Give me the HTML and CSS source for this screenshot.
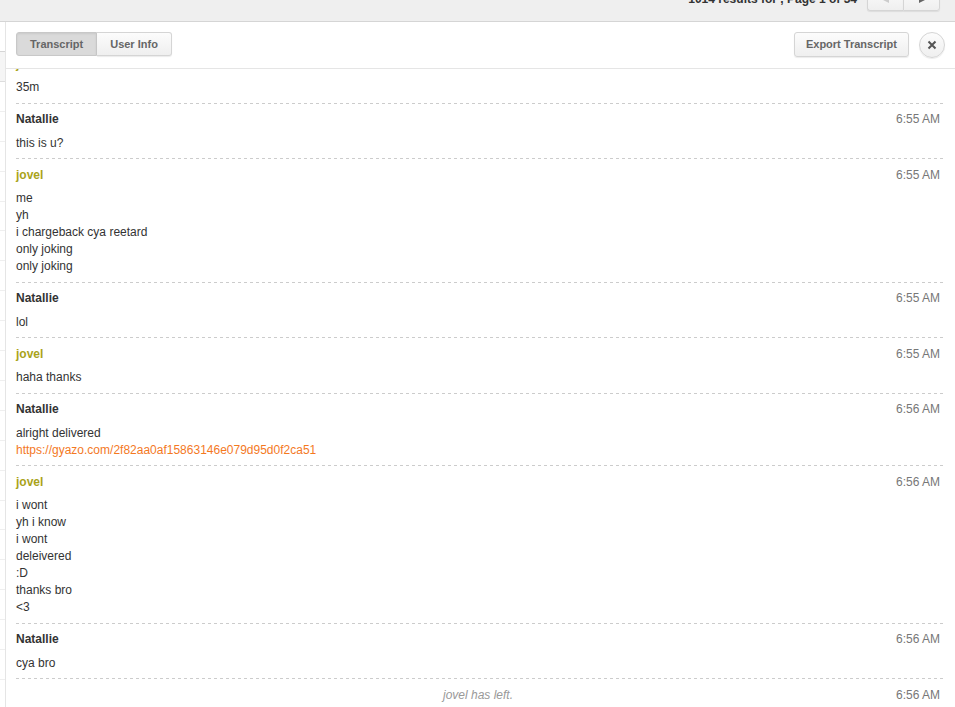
FILE: index.html
```
<!DOCTYPE html>
<html lang="en">
<head>
  <meta charset="UTF-8">
  <meta name="viewport" content="width=device-width, initial-scale=1.0">
  <title>Chat Transcript</title>
  <link rel="stylesheet" href="styles.css">
</head>
<body>
  <header class="results-bar">
    <span class="results-count">1014 results for , Page 1 of 34</span>
    <div class="pager">
      <button type="button" class="prev" aria-label="Previous page" disabled>
        <svg width="6" height="6" viewBox="0 0 6 6"><path d="M6 0v6L0 3z"/></svg>
      </button>
      <button type="button" class="next" aria-label="Next page">
        <svg width="6" height="6" viewBox="0 0 6 6"><path d="M0 0v6l6-3z"/></svg>
      </button>
    </div>
  </header>

  <main class="content">
    <ul class="chat-list" aria-hidden="true">
      <li class="list-head"></li>
      <li class="selected"></li>
      <li></li><li></li><li></li><li></li><li></li><li></li><li></li><li></li>
      <li></li><li></li><li></li><li></li><li></li><li></li><li></li><li></li>
      <li></li><li></li><li></li><li></li><li></li>
    </ul>

    <section class="panel">
      <div class="toolbar">
        <div class="tabs">
          <button type="button" class="active">Transcript</button>
          <button type="button">User Info</button>
        </div>
        <div class="actions">
          <button type="button" class="export">Export Transcript</button>
          <button type="button" class="close" aria-label="Close">
            <svg width="10" height="10" viewBox="0 0 10 10"><path d="M1.5 1.5l7 7M8.5 1.5l-7 7"/></svg>
          </button>
        </div>
      </div>

      <div class="transcript">
        <div class="message visitor">
          <div class="message-head"><strong>jovel</strong></div>
          <p>35m</p>
        </div>
        <div class="message">
          <div class="message-head"><strong>Natallie</strong><time>6:55 AM</time></div>
          <p>this is u?</p>
        </div>
        <div class="message visitor">
          <div class="message-head"><strong>jovel</strong><time>6:55 AM</time></div>
          <p>me</p>
          <p>yh</p>
          <p>i chargeback cya reetard</p>
          <p>only joking</p>
          <p>only joking</p>
        </div>
        <div class="message">
          <div class="message-head"><strong>Natallie</strong><time>6:55 AM</time></div>
          <p>lol</p>
        </div>
        <div class="message visitor">
          <div class="message-head"><strong>jovel</strong><time>6:55 AM</time></div>
          <p>haha thanks</p>
        </div>
        <div class="message">
          <div class="message-head"><strong>Natallie</strong><time>6:56 AM</time></div>
          <p>alright delivered</p>
          <p><a href="https://gyazo.com/2f82aa0af15863146e079d95d0f2ca51">https://gyazo.com/2f82aa0af15863146e079d95d0f2ca51</a></p>
        </div>
        <div class="message visitor">
          <div class="message-head"><strong>jovel</strong><time>6:56 AM</time></div>
          <p>i wont</p>
          <p>yh i know</p>
          <p>i wont</p>
          <p>deleivered</p>
          <p>:D</p>
          <p>thanks bro</p>
          <p>&lt;3</p>
        </div>
        <div class="message">
          <div class="message-head"><strong>Natallie</strong><time>6:56 AM</time></div>
          <p>cya bro</p>
        </div>
        <div class="message notice">
          <em>jovel has left.</em><time>6:56 AM</time>
        </div>
      </div>
    </section>
  </main>
</body>
</html>
```
FILE: styles.css
```
* {
  box-sizing: border-box;
}
body {
  font-family: "Liberation Sans", Arial, sans-serif;
  font-size: 12px;
  line-height: 17px;
  color: #333;
  margin: 0;
  height: 100vh;
  display: flex;
  flex-direction: column;
  overflow: hidden;
  background-color: #fff;
}
button {
  font-family: inherit;
  font-size: 11px;
  font-weight: bold;
  line-height: 14px;
  color: #666;
  border: 1px solid #d5d5d5;
  background: linear-gradient(#fcfcfc, #efefef);
  box-shadow: 0 1px 1px rgba(0, 0, 0, 0.08);
  cursor: pointer;
}

/* results bar, scrolled partly out of view */
.results-bar {
  flex: none;
  height: 22px;
  display: flex;
  justify-content: flex-end;
  align-items: flex-end;
  gap: 10px;
  padding: 0 15px 10px 0;
  background-color: #efefef;
  border-bottom: 1px solid #d5d5d5;
  overflow: hidden;
}
.results-count {
  font-weight: bold;
  margin-bottom: 3px;
}
.pager {
  display: flex;
}
.pager button {
  width: 37px;
  height: 25px;
  padding: 0;
}
.pager svg {
  fill: #666;
}
.pager .prev {
  width: 36px;
  border-radius: 3px 0 0 3px;
  border-right: 0;
}
.pager .prev svg {
  fill: #ccc;
}
.pager .next {
  border-radius: 0 3px 3px 0;
}

.content {
  flex: 1;
  min-height: 0;
  display: flex;
}
.chat-list {
  flex: none;
  width: 6px;
  margin: 0;
  padding: 0;
  list-style: none;
  border-right: 1px solid #e5e5e5;
  overflow: hidden;
}
.chat-list li {
  height: 30px;
  border-bottom: 1px solid #efefef;
}
.chat-list li:nth-child(10n + 7) {
  height: 29px;
}
.chat-list .list-head {
  border-bottom-color: #d5d5d5;
}
.chat-list .selected {
  background-color: #f5f5f5;
  border-bottom-color: #ddd;
}

.panel {
  flex: 1;
  min-width: 0;
  display: flex;
  flex-direction: column;
}
.toolbar {
  flex: none;
  height: 47px;
  display: flex;
  justify-content: space-between;
  align-items: flex-start;
  padding: 10px;
  border-bottom: 1px solid #e5e5e5;
}
.tabs {
  display: flex;
}
.tabs button {
  height: 24px;
  padding: 0 13px;
  border-radius: 0 3px 3px 0;
  border-left: 0;
}
.tabs .active {
  border: 1px solid #c8c8c8;
  border-radius: 3px 0 0 3px;
  background: #dadada;
  box-shadow: inset 0 1px 2px rgba(0, 0, 0, 0.08);
}
.actions {
  display: flex;
  gap: 10px;
}
.export {
  height: 25px;
  padding: 0 11px 1px;
  border-radius: 3px;
}
.close {
  width: 26px;
  height: 26px;
  padding: 0;
  border-radius: 50%;
  display: flex;
  justify-content: center;
  align-items: center;
}
.close svg {
  fill: none;
  stroke: #555;
  stroke-width: 2;
}

/* kept at the latest message */
.transcript {
  flex: 1;
  min-height: 0;
  display: flex;
  flex-direction: column;
  justify-content: flex-end;
  padding: 0 12px 0 10px;
  overflow: hidden;
}
.message {
  flex: none;
  padding: 7px 3px 7px 0;
  background: repeating-linear-gradient(to right, #ccc 0 3px, transparent 3px 6px) bottom / 100% 1px no-repeat;
}
.message p {
  margin: 0;
}
.message-head {
  display: flex;
  justify-content: space-between;
  margin-bottom: 7px;
}
.visitor {
  padding: 8px 3px 8px 0;
}
.visitor .message-head {
  margin-bottom: 6px;
}
.visitor strong {
  color: #a9a31b;
}
.message time {
  color: #777;
}
.message a {
  color: #f4791f;
  text-decoration: none;
}
.notice {
  display: grid;
  grid-template-columns: 1fr auto 1fr;
  padding: 8px 0 3px;
  padding-right: 3px;
  background: none;
}
.notice em {
  grid-column: 2;
  color: #999;
}
.notice time {
  text-align: right;
}
```
